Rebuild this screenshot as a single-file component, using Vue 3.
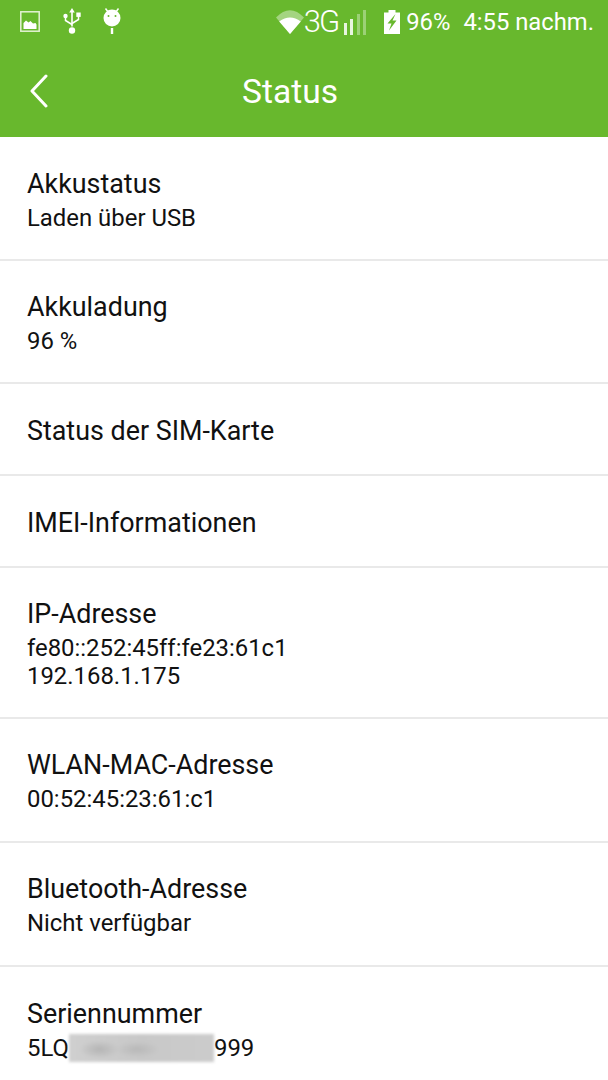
<script setup>
const rows = [
  { title: "Akkustatus", lines: ["Laden über USB"], height: 123 },
  { title: "Akkuladung", lines: ["96 %"], height: 123 },
  { title: "Status der SIM-Karte", lines: [], height: 92 },
  { title: "IMEI-Informationen", lines: [], height: 92 },
  { title: "IP-Adresse", lines: ["fe80::252:45ff:fe23:61c1", "192.168.1.175"], height: 151 },
  { title: "WLAN-MAC-Adresse", lines: ["00:52:45:23:61:c1"], height: 124 },
  { title: "Bluetooth-Adresse", lines: ["Nicht verfügbar"], height: 124 },
];
</script>

<template>
  <div class="screen">
    <header class="appbar">
      <div class="statusbar">
        <div class="status-left">
          <svg width="20" height="21" viewBox="0 0 20 21" class="ic-image">
            <rect x=".8" y=".8" width="18.400" height="19.400" fill="none" stroke="#e4f2d4" stroke-width="1.500" />
            <path d="M3.500 18v-6l2.500-2.500 2.500 2 2-1.500 2.500 2.500 2.500-.5 1 1.500V18z" fill="#fff" />
          </svg>
          <svg width="18" height="27" viewBox="0 0 18 27" class="ic-usb">
            <path d="M9 0l2.800 4.500h-2v14h-1.600v-14h-2z" fill="#fff" />
            <path d="M2.500 9v3.500l6.500 4M15.500 8v3.500l-6.500 4" fill="none" stroke="#fff" stroke-width="1.500" />
            <circle cx="2.500" cy="8" r="2.200" fill="#fff" />
            <rect x="13.300" y="4.500" width="4.400" height="4.400" fill="#fff" />
            <circle cx="9" cy="22.500" r="3.200" fill="#fff" />
          </svg>
          <svg width="18" height="27" viewBox="0 0 18 27" class="ic-android">
            <path d="M2.500 .5l3 4M15.500 .5l-3 4" stroke="#fff" stroke-width="1.500" fill="none" />
            <circle cx="9" cy="10" r="8.500" fill="#fff" />
            <circle cx="5.500" cy="8" r="1" fill="#68b82d" />
            <circle cx="12.500" cy="8" r="1" fill="#68b82d" />
            <rect x="7.800" y="20" width="2.400" height="6" fill="#fff" />
          </svg>
        </div>
        <div class="status-right">
          <svg width="28" height="24" viewBox="0 0 28 24" class="ic-wifi">
            <path d="M0 7.500Q14-7 28 7.500L14 24z" fill="#fff" fill-opacity=".4" />
            <path d="M3.200 11.500Q14 3.500 24.800 11.500L14 24z" fill="#fff" />
          </svg>
          <span class="net">3G</span>
          <svg width="22" height="25" viewBox="0 0 22 25" class="ic-signal">
            <rect x="0" y="13" width="3" height="12" fill="#fff" fill-opacity=".85" />
            <rect x="6" y="9" width="3" height="16" fill="#fff" fill-opacity=".85" />
            <rect x="13" y="4" width="3" height="21" fill="#fff" fill-opacity=".35" />
            <rect x="19" y="0" width="3" height="25" fill="#fff" fill-opacity=".35" />
          </svg>
          <svg width="16" height="24" viewBox="0 0 16 24" class="ic-battery">
            <path fill-rule="evenodd" fill="#fff" d="M4.500 0h7v2.500H16V24H0V2.500h4.500zM11.500 4L3.500 13.500h4L5 20.500 12.500 10.500H8.500z" />
          </svg>
          <span class="pct">96%</span>
          <span class="clock">4:55 nachm.</span>
        </div>
      </div>
      <div class="toolbar">
        <svg width="20" height="34" viewBox="0 0 20 34" class="ic-back">
          <path d="M17 2L3 17l14 15" fill="none" stroke="#fff" stroke-width="3" stroke-linecap="round" stroke-linejoin="round" />
        </svg>
        <h1 class="toolbar-title">Status</h1>
      </div>
    </header>

    <section class="list">
      <article v-for="row in rows" :key="row.title" class="row" :style="{ height: row.height + 'px' }">
        <p class="row-title">{{ row.title }}</p>
        <p v-for="line in row.lines" :key="line" class="row-sub">{{ line }}</p>
      </article>
      <article class="row row--last">
        <p class="row-title">Seriennummer</p>
        <p class="row-sub serial">5LQ<span class="smudge"><i></i></span>999</p>
      </article>
    </section>
  </div>
</template>

<style scoped>
.screen {
  width: 608px;
  height: 1080px;
  overflow: hidden;
  background: #fff;
  font-family: Roboto, "Liberation Sans", sans-serif;
  color: #111;
}

.appbar {
  height: 137px;
  background: #68b82d;
  color: #fff;
  display: flex;
  flex-direction: column;
}

.statusbar {
  height: 43px;
  padding: 0 14px 1px 20px;
  display: flex;
  justify-content: space-between;
  align-items: center;
}

.status-left,
.status-right {
  display: flex;
  align-items: center;
}

.ic-usb {
  margin-left: 23px;
}

.ic-android {
  margin-left: 22px;
}

.net {
  font-size: 31px;
  font-weight: 300;
  letter-spacing: -2px;
}

.ic-signal {
  margin-left: 6px;
  margin-top: 1px;
}

.ic-battery {
  margin-left: 18px;
}

.pct {
  font-size: 23.800px;
  margin-left: 6px;
}

.clock {
  font-size: 23.800px;
  margin-left: 13px;
}

.toolbar {
  flex: 1;
  display: flex;
  align-items: center;
  padding-left: 29px;
  padding-top: 1px;
}

.toolbar-title {
  margin: 0 0 0 193px;
  font-size: 33.600px;
  font-weight: 400;
}

.list {
  padding-top: 1px;
}

.row {
  box-sizing: border-box;
  padding: 0 27px;
  border-bottom: 2px solid #e9e9e9;
  display: flex;
  flex-direction: column;
  justify-content: center;
}

.row--last {
  border-bottom: 0;
  height: 124px;
}

.row-title {
  margin: 0 0 2px;
  font-size: 26.880px;
  line-height: 36px;
}

.row-title:only-child {
  margin: 4px 0 0;
}

.row-sub {
  margin: 0;
  font-size: 23.900px;
  line-height: 28px;
}

.serial {
  display: flex;
}

.smudge {
  width: 145px;
  height: 30px;
  display: block;
  padding: 1px 0;
  margin-top: -1px;
  box-sizing: border-box;
}

.smudge i {
  display: block;
  height: 100%;
  background:
    radial-gradient(ellipse 20px 9px at 21% 55%, #b4b4b4, transparent),
    radial-gradient(ellipse 22px 8px at 47% 55%, #b8b8b8, transparent),
    linear-gradient(90deg, #cfcfcf, #c8c8c8 50%, #cbcbcb);
  filter: blur(1.500px);
}
</style>
